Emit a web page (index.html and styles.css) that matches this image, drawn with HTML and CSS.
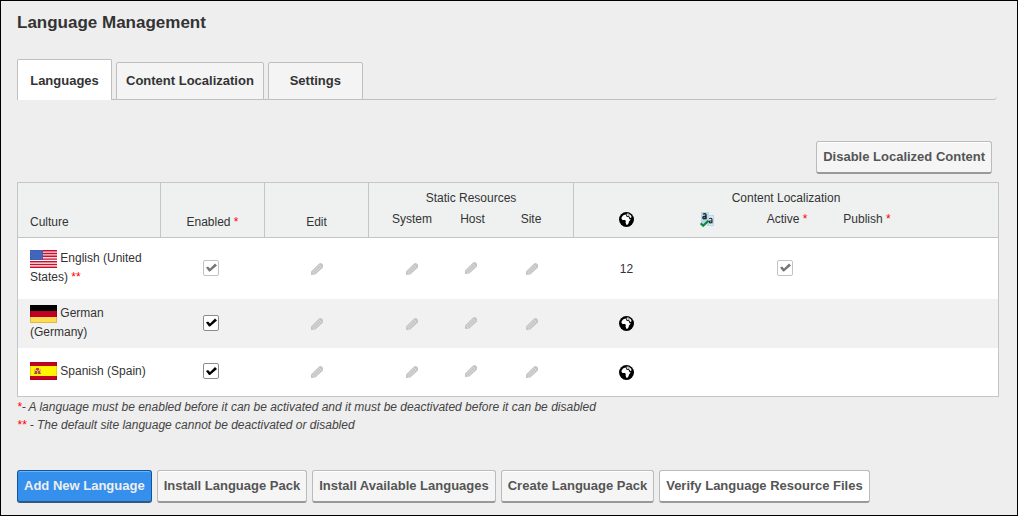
FILE: index.html
```html
<!DOCTYPE html>
<html lang="en">
<head>
<meta charset="utf-8">
<title>Language Management</title>
<link rel="stylesheet" href="styles.css">
</head>
<body>
<svg class="sprite" aria-hidden="true">
  <symbol id="pencil" viewBox="0 0 12 12">
    <path fill="#c4c4c4" d="M0 12V8.400L7.800.8Q8.800 0 10 0L12 1.800V4.500L4.400 11.600Z"/>
    <path stroke="#ededed" stroke-width=".6" fill="none" d="M2.200 8.300 7.600 3.200M3.700 9.800 9.400 4.400M7.900 1.800l2.400 2.500M1 8.500l2.700 2.700"/>
  </symbol>
  <symbol id="globe" viewBox="0 0 15 15">
    <circle cx="7.500" cy="7.500" r="7.500" fill="#000"/>
    <path fill="#fff" d="M2.600 5.400 4 3.500 6.200 2.600 7.400 3.200 7.200 4.200 9.800 5.200 10.600 7.200 11.800 7.400 10 9.600 9.600 11.200 8.200 13 7.200 12.600 6.600 10.400 6.800 9 6 8 3.500 8 2.500 6.800Z"/>
    <path fill="#fff" d="M7.400 1.800 9.400 1.600 12 3.400 12.600 5.200 11.400 6 10 4.400 8 3.800Z"/>
    <path fill="none" stroke="#000" stroke-width=".6" d="M7 3.400 8.200 4.300 10 4.400 11 6.600M8.600 2.800 10.500 3.200"/>
  </symbol>
</svg>
<main class="page">
  <h1 class="title">Language Management</h1>
  <nav class="tabs">
    <a class="tab tab-active" href="#languages">Languages</a>
    <a class="tab" href="#content">Content Localization</a>
    <a class="tab" href="#settings">Settings</a>
  </nav>
  <div class="toolbar"><button class="btn" type="button">Disable Localized Content</button></div>
  <table class="grid">
    <colgroup>
      <col class="c-culture"><col class="c-mid"><col class="c-mid">
      <col class="c-system"><col class="c-host"><col class="c-site">
      <col class="c-globe"><col class="c-loc"><col class="c-loc"><col class="c-loc"><col class="c-last">
    </colgroup>
    <thead>
      <tr class="head-top">
        <th class="culture line" rowspan="2">Culture</th>
        <th class="line" rowspan="2">Enabled <span class="req">*</span></th>
        <th class="line" rowspan="2">Edit</th>
        <th class="line group" colspan="3">Static Resources</th>
        <th class="group" colspan="5">Content Localization</th>
      </tr>
      <tr class="head-sub">
        <th class="first">System</th>
        <th>Host</th>
        <th class="line last">Site</th>
        <th class="first icon"><svg class="globe" role="img" aria-label="Pages"><use href="#globe"/></svg></th>
        <th class="icon"><svg class="translated" viewBox="0 0 15 15" role="img" aria-label="Translated">
          <path fill="#b9d7e6" d="M1 0h8v3h5v11H7v-2H1z"/>
          <path fill="#dceaf1" d="M9 4h4v9H9z"/>
          <path fill="none" stroke="#17242b" stroke-width="1.400" d="M3.200 2.400C4 1.300 6 1.400 6 3v4.300M6 4.200C3.500 4.100 2.800 5 2.900 6s2 1.200 3.100-.3"/>
          <path fill="none" stroke="#17242b" stroke-width="1.100" d="M9.300 6.800c.8-.9 2.700-.7 2.700.7v3.800M12 8.700c-2-.1-2.800.6-2.700 1.500s1.900 1 2.700-.2"/>
          <path fill="none" stroke="#108a43" stroke-width="2.200" d="M.6 11.300 3.200 13.700 8.500 8.600"/>
        </svg></th>
        <th>Active <span class="req">*</span></th>
        <th>Publish <span class="req">*</span></th>
        <th></th>
      </tr>
    </thead>
    <tbody>
      <tr>
        <td class="culture"><svg class="flag" viewBox="0 0 27 18" aria-hidden="true">
          <path fill="#fff" d="M0 0h27v18H0z"/>
          <path fill="#fadce2" d="M0 0h27v9H0z"/>
          <path stroke="#c8102e" stroke-width="1.400" d="M0 .7h27M0 3.500h27M0 6.300h27M0 9.100h27M0 11.800h27M0 14.500h27M0 17.300h27"/>
          <path fill="#3c60b8" d="M0 0h13v10H0z"/>
          <path stroke="#6483c9" stroke-width=".8" stroke-dasharray="1 1.200" d="M1 2h11M2 4h10M1 6h11M2 8h10"/>
        </svg> English (United States) <span class="req">**</span></td>
        <td class="tick"><input class="check" type="checkbox" checked disabled aria-label="English (United States) enabled"></td>
        <td><svg class="pencil"><use href="#pencil"/></svg></td>
        <td class="first"><svg class="pencil"><use href="#pencil"/></svg></td>
        <td class="tick"><svg class="pencil"><use href="#pencil"/></svg></td>
        <td class="last"><svg class="pencil"><use href="#pencil"/></svg></td>
        <td class="first">12</td>
        <td></td>
        <td class="tick"><input class="check" type="checkbox" checked disabled aria-label="English (United States) active"></td>
        <td></td>
        <td></td>
      </tr>
      <tr class="alt">
        <td class="culture"><svg class="flag" viewBox="0 0 27 18" aria-hidden="true">
          <path d="M0 0h27v6H0z"/><path fill="#c00022" d="M0 6h27v6H0z"/><path fill="#ffdc52" d="M0 12h27v6H0z"/>
          <path fill="none" stroke="#000" stroke-opacity=".15" d="M.5.5h26v17H.5z"/>
        </svg> German (Germany)</td>
        <td class="tick"><input class="check" type="checkbox" checked aria-label="German (Germany) enabled"></td>
        <td><svg class="pencil"><use href="#pencil"/></svg></td>
        <td class="first"><svg class="pencil"><use href="#pencil"/></svg></td>
        <td class="tick"><svg class="pencil"><use href="#pencil"/></svg></td>
        <td class="last"><svg class="pencil"><use href="#pencil"/></svg></td>
        <td class="first"><svg class="globe"><use href="#globe"/></svg></td>
        <td></td><td></td><td></td><td></td>
      </tr>
      <tr>
        <td class="culture"><svg class="flag" viewBox="0 0 27 18" aria-hidden="true">
          <path fill="#c60024" d="M0 0h27v18H0z"/><path fill="#fff500" d="M0 4h27v10H0z"/>
          <path fill="#e8b45a" d="M4 7h7v5H4z"/>
          <path fill="#b8442a" d="M6 6h3v2H6zM5 9h2v3H5zM8 9h2v3H8z"/>
          <path fill="#8a6a9c" d="M7 8h1v1H7zM4 11h1v1H4zM10 11h1v1h-1z"/>
          <path fill="none" stroke="#000" stroke-opacity=".12" d="M.5.5h26v17H.5z"/>
        </svg> Spanish (Spain)</td>
        <td class="tick"><input class="check" type="checkbox" checked aria-label="Spanish (Spain) enabled"></td>
        <td><svg class="pencil"><use href="#pencil"/></svg></td>
        <td class="first"><svg class="pencil"><use href="#pencil"/></svg></td>
        <td class="tick"><svg class="pencil"><use href="#pencil"/></svg></td>
        <td class="last"><svg class="pencil"><use href="#pencil"/></svg></td>
        <td class="first"><svg class="globe"><use href="#globe"/></svg></td>
        <td></td><td></td><td></td><td></td>
      </tr>
    </tbody>
  </table>
  <div class="notes">
    <p><span class="req">*</span>- A language must be enabled before it can be activated and it must be deactivated before it can be disabled</p>
    <p><span class="req">**</span> - The default site language cannot be deactivated or disabled</p>
  </div>
  <div class="actions">
    <button class="btn btn-primary" type="button">Add New Language</button>
    <button class="btn" type="button">Install Language Pack</button>
    <button class="btn" type="button">Install Available Languages</button>
    <button class="btn" type="button">Create Language Pack</button>
    <button class="btn btn-light" type="button">Verify Language Resource Files</button>
  </div>
</main>
</body>
</html>
```
FILE: styles.css
```css
* { box-sizing: border-box; }
body {
  margin: 0;
  background: #eee;
  color: #333;
  font: 12px/18px "Liberation Sans", Arial, sans-serif;
}
.sprite { position: absolute; width: 0; height: 0; }
.page {
  min-height: 100vh;
  padding: 10px 18px 12px 16px;
  border: 1px solid #000;
}
.title { margin: 0; font-size: 17px; line-height: 24px; }
.tabs {
  display: flex;
  align-items: flex-end;
  gap: 4px;
  height: 41px;
  margin: 24px 2px 0 0;
  border-bottom: 1px solid #bfbfbf;
  border-bottom-right-radius: 4px;
}
.tab {
  height: 38px;
  min-width: 95px;
  margin-bottom: -1px;
  padding: 0 9px;
  border: 1px solid #bfbfbf;
  border-radius: 2px 2px 0 0;
  background: #f4f4f4;
  color: #333;
  font-size: 13px;
  font-weight: bold;
  line-height: 36px;
  text-align: center;
  text-decoration: none;
}
.tab-active {
  height: 41px;
  border-bottom: 0;
  background: #fff;
  line-height: 42px;
}
.toolbar { display: flex; justify-content: flex-end; padding: 41px 7px 8px 0; }
.btn {
  height: 33px;
  padding: 0 6px 1px;
  border: 1px solid #bbb;
  border-bottom: 2px solid #999;
  border-radius: 3px;
  background: #f5f5f5;
  box-shadow: inset 0 1px 0 #fff;
  color: #555;
  font: bold 13px/28px "Liberation Sans", Arial, sans-serif;
}
.btn-light { background: #fff; }
.btn-primary {
  border-color: #0d569e;
  border-bottom-color: #34597e;
  background: #358fec;
  box-shadow: inset 0 1px 0 #6db4f8;
  color: #eee;
}
.grid {
  width: 100%;
  table-layout: fixed;
  border: 1px solid #c4c6c6;
  border-spacing: 0;
  background: #fff;
}
.c-culture { width: 143px; }
.c-mid { width: 104px; }
.c-system { width: 74px; }
.c-host { width: 59px; }
.c-site { width: 72px; }
.c-globe { width: 93px; }
.c-loc { width: 80px; }
.c-last { width: 91px; }
th, td { padding: 0; text-align: center; font-weight: normal; }
th {
  background: #eff1f0;
  border-bottom: 1px solid #c4c6c6;
  vertical-align: bottom;
  padding-bottom: 6px;
}
th.line { border-right: 1px solid #c4c6c6; }
th.group { border-bottom: 0; padding: 6px 0 0; }
.head-top { height: 24px; }
.head-sub { height: 31px; }
.head-sub th { padding-top: 3px; vertical-align: top; }
.head-sub .icon { padding-top: 5px; }
.head-sub .first, td.first { padding-left: 12px; }
.head-sub .last, td.last { padding-right: 13px; }
.grid .culture { padding-left: 12px; text-align: left; }
td.culture { padding: 4px 14px 6px 12px; }
td.tick { padding: 0 4px 2px 0; }
tbody tr { height: 49px; }
tbody tr:first-child { height: 61px; }
tbody tr:last-child { height: 48px; }
.alt { background: #f1f1f1; }
.req { color: #f00; }
.flag { width: 27px; height: 18px; vertical-align: middle; }
.pencil { display: block; width: 12px; height: 12px; margin: 0 auto; }
.globe { display: block; width: 15px; height: 15px; margin: 0 auto; }
.translated { display: block; width: 15px; height: 15px; margin: 0 auto; }
.check {
  appearance: none;
  display: block;
  width: 16px;
  height: 16px;
  margin: 0 auto;
  border: 1px solid #8c8c8c;
  border-radius: 2px;
  background: #fff;
}
.check::before {
  content: "";
  display: block;
  width: 14px;
  height: 14px;
  background: #000;
  clip-path: polygon(2px 7px, 4px 6px, 6px 8px, 11px 3px, 13px 5px, 6px 11px, 5px 11px);
}
.check:disabled { border-color: #c3c3c3; }
.check:disabled::before { background: #777; }
.notes { padding-top: 1px; color: #444; font-style: italic; }
.notes p { margin: 0; }
.actions { display: flex; flex-wrap: wrap; gap: 5px; padding-top: 36px; }
```
